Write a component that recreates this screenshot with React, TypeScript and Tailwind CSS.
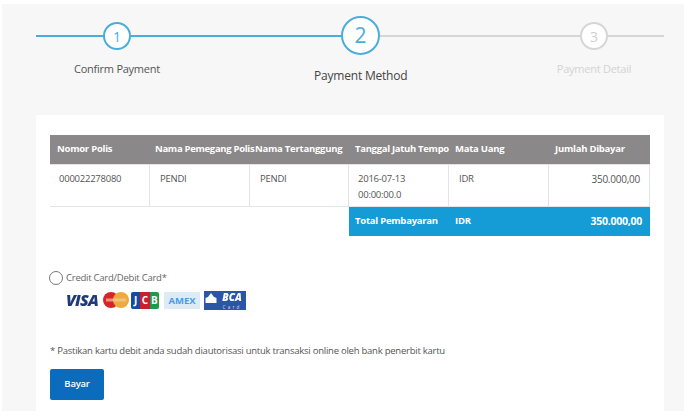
import React from 'react';

const font = { fontFamily: '"Open Sans", "Noto Sans", sans-serif' };

const head = 'h-[29px] bg-[#8b8889] text-white font-bold flex items-center whitespace-nowrap';
const cell = 'h-[43px] border border-[#e4e4e4] border-l-0 text-[#555555] pt-[6px] leading-[16px]';
const total = 'h-[29px] bg-[#159bd5] text-white font-bold flex items-center whitespace-nowrap';

export default function App() {
  return (
    <div className="w-[688px] h-[418px] bg-white overflow-hidden" style={font}>
      <div className="ml-[2px] mt-[4px] w-[682px] h-[407px] bg-[#f7f7f7] pl-[34px] pr-[20px] flex flex-col">
        <div className="h-[111px] relative">
          <div className="absolute left-0 right-0 top-[31px] h-[2px] flex">
            <div className="w-[322px] bg-[#4aaedb]" />
            <div className="flex-1 bg-[#d6d6d6]" />
          </div>
          <div className="absolute left-[67px] top-[18px] w-[28px] h-[28px] rounded-full bg-white border-2 border-[#4aaedb] text-[#4aaedb] text-[14px] flex items-center justify-center">1</div>
          <div className="absolute left-[38px] top-[57px] text-[11px] tracking-[-0.25px] w-[86px] text-center text-[#555555] whitespace-nowrap">Confirm Payment</div>
          <div className="absolute left-[305px] top-[12px] w-[39px] h-[39px] rounded-full bg-white border-2 border-[#4aaedb] text-[#4aaedb] text-[21px] flex items-center justify-center">2</div>
          <div className="absolute left-[278px] top-[63px] text-[12px] tracking-[-0.2px] w-[92px] text-center text-[#444444] whitespace-nowrap">Payment Method</div>
          <div className="absolute left-[544px] top-[18px] w-[28px] h-[28px] rounded-full bg-white border-2 border-[#d6d6d6] text-[#d0d0d0] text-[14px] flex items-center justify-center">3</div>
          <div className="absolute left-[516px] top-[57px] text-[11px] tracking-[-0.25px] w-[84px] text-center text-[#d4d4d4] whitespace-nowrap">Payment Detail</div>
        </div>
        <div className="flex-1 bg-white px-[14px] pt-[20px] text-[9.5px] tracking-[-0.24px]">
          <div className="grid grid-cols-[100px_100px_99px_100px_100px_101px] w-[600px]">
            <div className={`${head} px-[7px]`}>Nomor Polis</div>
            <div className={`${head} pl-[5px] relative z-10 tracking-[-0.3px]`}>Nama Pemegang Polis</div>
            <div className={`${head} pl-[5px]`}>Nama Tertanggung</div>
            <div className={`${head} pl-[6px] relative z-10 tracking-[-0.3px]`}>Tanggal Jatuh Tempo</div>
            <div className={`${head} pl-[6px]`}>Mata Uang</div>
            <div className={`${head} pl-[6px]`}>Jumlah Dibayar</div>
            <div className={`${cell} border-l pl-[9px]`}>000022278080</div>
            <div className={`${cell} pl-[10px]`}>PENDI</div>
            <div className={`${cell} pl-[10px]`}>PENDI</div>
            <div className={`${cell} pl-[9px]`}>2016-07-13<br />00:00:00.0</div>
            <div className={`${cell} pl-[10px]`}>IDR</div>
            <div className={`${cell} pr-[9px] text-right text-[10px]`}>350.000,00</div>
            <div className="col-span-3 h-[29px]" />
            <div className={`${total} pl-[6px]`}>Total Pembayaran</div>
            <div className={`${total} pl-[6px]`}>IDR</div>
            <div className={`${total} pr-[8px] justify-end text-[10.5px]`}>350.000,00</div>
          </div>
          <div className="mt-[35px] -ml-[1px] flex items-center gap-[3px] text-[#666666] leading-[14px]">
            <div className="w-[14px] h-[14px] rounded-full border border-[#777777]" />
            Credit Card/Debit Card*
          </div>
          <div className="mt-[5px] ml-[16px] flex items-center h-[20px] blur-[0.4px] tracking-normal">
            <span className="w-[37px] text-[16px] font-extrabold italic text-[#1f3a7a] tracking-[-0.8px] leading-none">VISA</span>
            <svg width="26" height="16" viewBox="0 0 26 16" className="shrink-0">
              <circle cx="8" cy="8" r="8" fill="#d8232a" />
              <circle cx="18" cy="8" r="8" fill="#eeaa3c" />
              <rect x="3" y="6.5" width="20" height="3" fill="#f3c9a0" opacity="0.7" />
            </svg>
            <div className="ml-[2px] w-[28px] h-[17px] flex overflow-hidden rounded-[2px] text-[10px] font-bold text-white leading-[17px] text-center">
              <div className="flex-1 bg-[#1a4a9c]">J</div>
              <div className="flex-1 bg-[#c8202f]">C</div>
              <div className="flex-1 bg-[#1f9a4a]">B</div>
            </div>
            <div className="ml-[5px] w-[36px] h-[17px] bg-[#dcebf4] text-[#4a9be0] text-[9.5px] font-bold leading-[17px] text-center">AMEX</div>
            <div className="ml-[4px] w-[42px] h-[19px] bg-[#2b55a5] text-white flex items-start">
              <svg width="14" height="13" viewBox="0 0 14 13" className="shrink-0 mt-[1px]">
                <path d="M7 1 L10 5 L12.5 6 L12.5 11 L1.5 11 L1.5 6 L4 5 Z" fill="#ffffff" />
              </svg>
              <div className="flex-1 flex flex-col items-center">
                <span className="text-[10px] italic font-extrabold leading-[12px]">BCA</span>
                <span className="mt-[2px] text-[5px] leading-[5px] tracking-[2px] text-[#c8d4ea]">Card</span>
              </div>
            </div>
          </div>
          <div className="mt-[34px] leading-[14px] text-[#555555] whitespace-nowrap">* Pastikan kartu debit anda sudah diautorisasi untuk transaksi online oleh bank penerbit kartu</div>
          <button className="mt-[11px] block w-[54px] h-[31px] rounded-[2px] bg-[#0b6cbd] text-white font-semibold">Bayar</button>
        </div>
      </div>
    </div>
  );
}
